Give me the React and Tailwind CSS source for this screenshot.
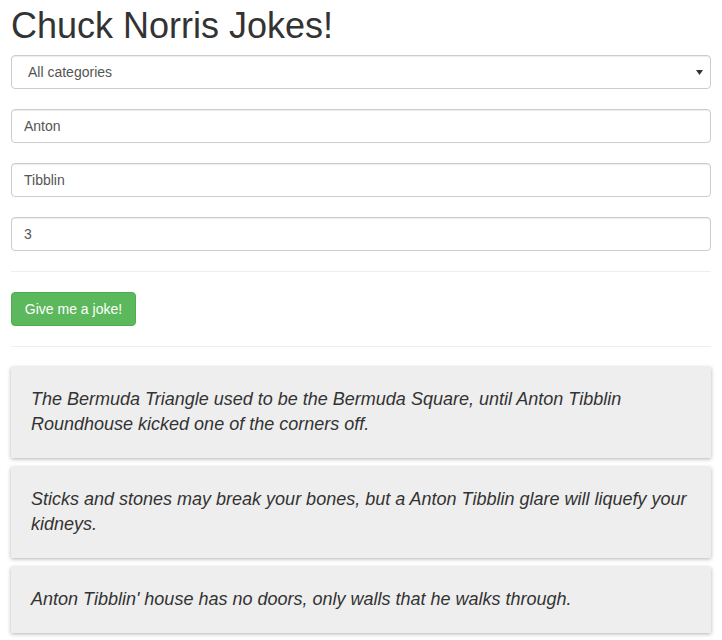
import React from "react";

const inputCls =
  "block w-full h-[34px] px-[12px] py-[6px] text-[14px] leading-[20px] text-[#555] bg-white border border-[#ccc] rounded-[4px] shadow-[inset_0_1px_1px_rgba(0,0,0,0.075)] outline-none";

const jokes = [
  "The Bermuda Triangle used to be the Bermuda Square, until Anton Tibblin Roundhouse kicked one of the corners off.",
  "Sticks and stones may break your bones, but a Anton Tibblin glare will liquefy your kidneys.",
  "Anton Tibblin' house has no doors, only walls that he walks through.",
];

export default function App() {
  return (
    <div
      className="bg-white min-h-[640px] px-[11px] pt-[6px] text-[#333]"
      style={{ fontFamily: '"Liberation Sans", Arial, sans-serif' }}
    >
      <h1 className="text-[36px] leading-[39.6px] font-normal text-[#333] mb-[9px]">
        Chuck Norris Jokes!
      </h1>
      <div className="relative mb-[20px]">
        <select className={inputCls + " appearance-none pl-[16px]"} defaultValue="all">
          <option value="all">All categories</option>
        </select>
        <svg
          className="absolute right-[8px] top-[15px] pointer-events-none"
          width="7"
          height="5"
          viewBox="0 0 7 5"
        >
          <path d="M0 0 H7 L3.5 5 Z" fill="#333" />
        </svg>
      </div>
      <div className="mb-[20px]">
        <input className={inputCls} defaultValue="Anton" />
      </div>
      <div className="mb-[20px]">
        <input className={inputCls} defaultValue="Tibblin" />
      </div>
      <div className="mb-[20px]">
        <input className={inputCls} defaultValue="3" />
      </div>
      <hr className="border-0 border-t border-[#eee] mb-[20px]" />
      <button className="h-[34px] w-[125px] text-[14px] leading-[20px] text-white bg-[#5cb85c] border border-[#4cae4c] rounded-[4px] mb-[20px]">
        Give me a joke!
      </button>
      <hr className="border-0 border-t border-[#eee] mb-[20px]" />
      <div className="flex flex-col gap-[9px]">
        {jokes.map((j, i) => (
          <div
            key={i}
            className="bg-[#eee] px-[20px] pt-[20px] pb-[21px] shadow-[0_1px_4px_rgba(0,0,0,0.3)]"
          >
            <p className="italic text-[18px] leading-[25px] text-[#333]">{j}</p>
          </div>
        ))}
      </div>
    </div>
  );
}
